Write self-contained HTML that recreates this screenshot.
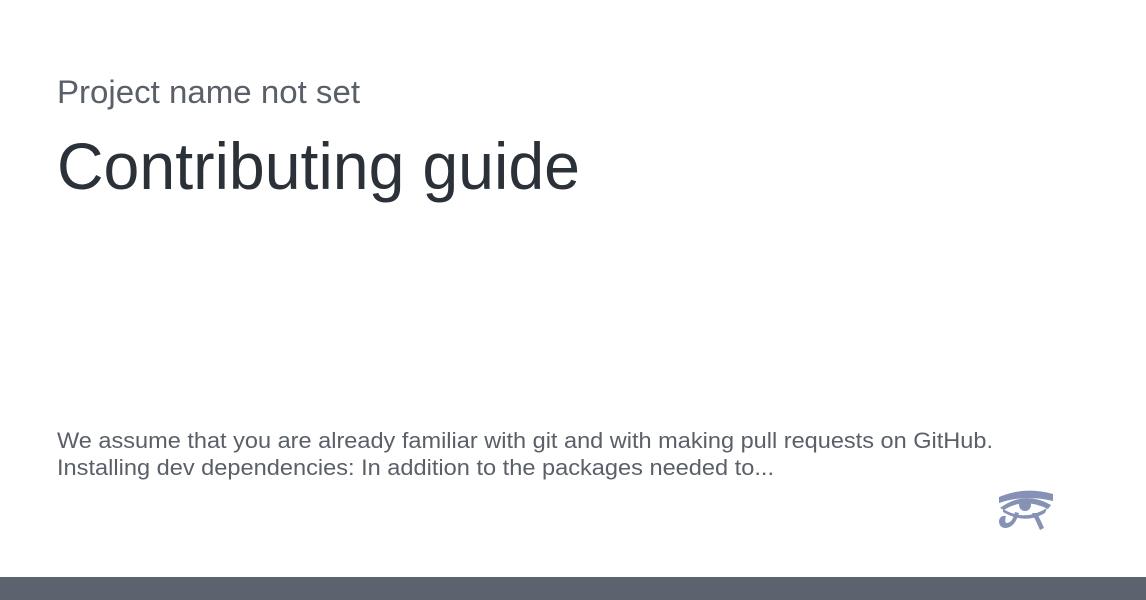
<!DOCTYPE html>
<html><head><style>
html,body{margin:0;padding:0;background:#fff;width:1146px;height:600px;overflow:hidden}
svg{display:block}
text{font-family:"Liberation Sans",sans-serif}
</style></head><body>
<svg width="1146" height="600" xmlns="http://www.w3.org/2000/svg">
<rect width="1146" height="600" fill="#fff"/>
<text x="57" y="103" font-size="32" fill="#5a6069" textLength="303" lengthAdjust="spacingAndGlyphs">Project name not set</text>
<text x="57" y="189" font-size="66" fill="#2b3139" textLength="523" lengthAdjust="spacingAndGlyphs">Contributing guide</text>
<text x="57" y="448" font-size="22" fill="#5a6069" textLength="936" lengthAdjust="spacingAndGlyphs">We assume that you are already familiar with git and with making pull requests on GitHub.</text>
<text x="57" y="475" font-size="22" fill="#5a6069" textLength="717" lengthAdjust="spacingAndGlyphs">Installing dev dependencies: In addition to the packages needed to...</text>
<g fill="#8592b6" stroke="none">
<path d="M999 497 Q1025 486 1053 494 L1053 501 Q1025 494 999 503 Z"/>
<path d="M1000 508 Q1024 490 1051 505 L1048 509 Q1024 497 1004 510 Z"/>
<path d="M1003 509 Q1025 522 1047 508 L1045 513 Q1025 525 1003 512 Z"/>
<circle cx="1025" cy="505" r="6"/>
<path d="M1019 513 Q1015 527 1006 528 Q999 528 999 521 Q1000 515 1006 516 Q1004 523 1007 523 Q1013 522 1015 512 Z"/>
<path d="M1032 513 L1037 513 Q1041 521 1044 528 L1040 530 Q1036 521 1032 513 Z"/>
</g>
<rect x="0" y="577" width="1146" height="23" fill="#5b636e"/>
</svg>
</body></html>
